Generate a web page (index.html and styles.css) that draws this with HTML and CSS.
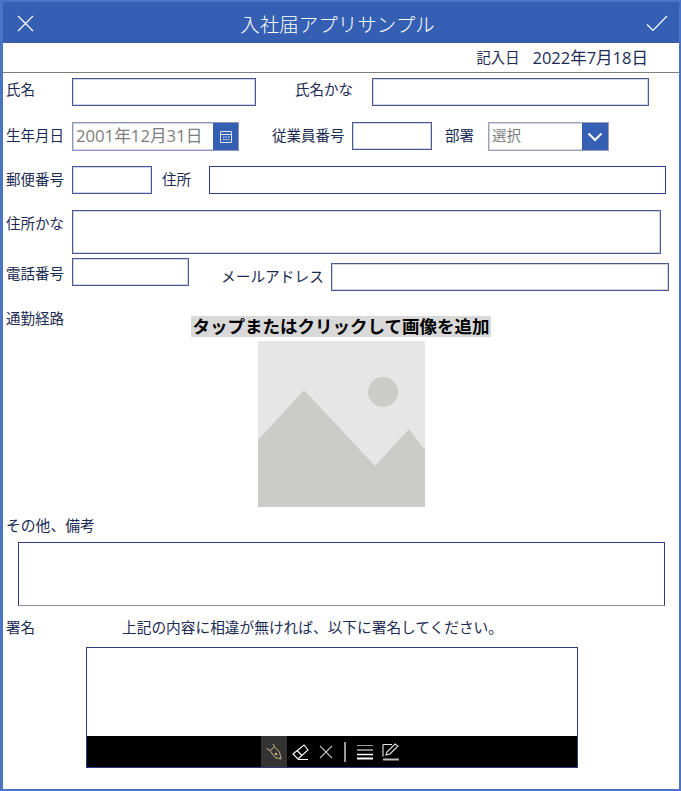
FILE: index.html
```html
<!DOCTYPE html>
<html lang="ja">
<head>
<meta charset="utf-8">
<title>入社届アプリサンプル</title>
<link rel="stylesheet" href="styles.css">
</head>
<body>
<div class="app">
  <header class="topbar">
    <svg class="ico-close" width="17" height="17" viewBox="0 0 17 17"><path d="M1 1 16 16M16 1 1 16" fill="none" stroke="#fff" stroke-width="1.300"/></svg>
    <h1 class="title">入社届アプリサンプル</h1>
    <svg class="ico-check" width="22" height="17" viewBox="0 0 22 17"><path d="M1 9.500 7 15.500 21 1" fill="none" stroke="#fff" stroke-width="1.200"/></svg>
  </header>
  <div class="datebar"><span class="datebar-label">記入日</span><span class="datebar-value">2022年7月18日</span></div>

  <div class="row row-1">
    <label class="lb lb-name">氏名</label><div class="field f-name"></div>
    <label class="lb lb-kana">氏名かな</label><div class="field f-kana"></div>
  </div>
  <div class="row row-2">
    <label class="lb lb-birth">生年月日</label>
    <div class="field f-date"><span class="placeholder">2001年12月31日</span>
      <span class="cal-btn"><svg width="14" height="14" viewBox="0 0 14 14"><path d="M1.500 1.500h11v11h-11zM1.500 4.500h11" fill="none" stroke="#dfe6f5"/><path d="M4 7h1.500M6.500 7H8M9 7h1.500M4 9.500h1.500M6.500 9.500H8M9 9.500h1.500" stroke="#dfe6f5"/></svg></span>
    </div>
    <label class="lb lb-emp">従業員番号</label><div class="field f-emp"></div>
    <label class="lb lb-dept">部署</label>
    <div class="field f-select"><span class="placeholder ph-small">選択</span>
      <span class="sel-btn"><svg width="16" height="10" viewBox="0 0 16 10"><path d="M1.500 1.500 8 8l6.500-6.500" fill="none" stroke="#fff" stroke-width="2"/></svg></span>
    </div>
  </div>
  <div class="row row-3">
    <label class="lb lb-zip">郵便番号</label><div class="field f-zip"></div>
    <label class="lb lb-addr">住所</label><div class="field f-addr"></div>
  </div>
  <div class="row row-4">
    <label class="lb lb-addrk">住所かな</label><div class="field f-addrk"></div>
  </div>
  <div class="row row-5">
    <label class="lb lb-tel">電話番号</label><div class="field f-tel"></div>
    <label class="lb lb-mail">メールアドレス</label><div class="field f-mail"></div>
  </div>
  <div class="row row-6">
    <label class="lb lb-route">通勤経路</label>
    <div class="picker">
      <span class="picker-text">タップまたはクリックして画像を追加</span>
      <svg class="picture" width="167" height="166" viewBox="0 0 167 166">
        <rect width="167" height="166" fill="#e6e6e6"/>
        <circle cx="125" cy="51" r="15" fill="#cbcbca"/>
        <path d="M0 99 46 49 117 125 151 88 167 109V166H0Z" fill="#cbcbca"/>
      </svg>
    </div>
  </div>
  <label class="lb lb-note">その他、備考</label>
  <div class="field f-note"></div>
  <div class="row row-sign">
    <label class="lb lb-sign">署名</label>
    <span class="sign-msg">上記の内容に相違が無ければ、以下に署名してください。</span>
  </div>
  <div class="field f-pad">
    <div class="pad-toolbar">
      <span class="tool tool-active"><svg width="24" height="24" viewBox="0 0 24 24"><path d="M4.500 8.500 8 10.500M11 4 12.500 7M8 10.500 12.500 7 17.500 12 19 19 13 17.500Z" fill="none" stroke="#c9b48a" stroke-width="1"/><circle cx="14" cy="14" r="1.300" fill="#c9b48a"/></svg></span>
      <span class="tool"><svg width="22" height="22" viewBox="0 0 22 22"><path d="M4 13 15 4 19 9 9 18ZM8 9.500l5 5M9 18.500H19" fill="none" stroke="#fff" stroke-width="1.100"/></svg></span>
      <span class="tool"><svg width="16" height="16" viewBox="0 0 16 16"><path d="M2 2 14 14M14 2 2 14" fill="none" stroke="#bdbdbd" stroke-width="1.100"/></svg></span>
      <span class="sep"></span>
      <span class="tool"><svg width="18" height="16" viewBox="0 0 18 16"><path d="M1 1.500h16" stroke="#999" stroke-width="1"/><path d="M1 6h16" stroke="#ddd" stroke-width="1.200"/><path d="M1 10.500h16" stroke="#fff" stroke-width="1.500"/><path d="M1 14.500h16" stroke="#fff" stroke-width="2"/></svg></span>
      <span class="tool"><svg width="20" height="20" viewBox="0 0 20 20"><path d="M2 2.500h9M2 2.500v12M5 13l1-3 8-8 3 2-8 8z" fill="none" stroke="#e6e6e6" stroke-width="1.100"/><path d="M2 17.500h16" stroke="#bbb" stroke-width="2"/></svg></span>
    </div>
  </div>
</div>
</body>
</html>
```
FILE: styles.css
```css
* { box-sizing: border-box; }
html, body { margin: 0; padding: 0; background: #fff; }
body { width: 681px; height: 791px; overflow: hidden; font-family: "Open Sans", "Noto Sans CJK JP", sans-serif; color: #1b2a52; }
.app { width: 681px; height: 791px; border: solid #4a74c6; border-width: 2px 2px 2px 3px; background: #fff; }

.topbar { height: 41px; background: #355fb2; display: flex; align-items: center; padding: 0 11px 0 14px; border-bottom: 1px solid #3d5a96; }
.title { flex: 1; margin: 0; padding: 6px 5px 0 0; text-align: center; color: #fff; font-size: 19.500px; font-weight: 300; line-height: 34px; }
.ico-close { margin-top: 2px; }
.ico-check { margin-top: 2px; }

.datebar { height: 30px; border-bottom: 1px solid #7f7f7f; display: flex; justify-content: flex-end; align-items: center; padding: 0 31px 2px 0; color: #1b2a52; }
.datebar-label { font-size: 14.300px; margin-right: 13px; }
.datebar-value { font-size: 16.500px; }

.row { display: flex; align-items: flex-start; }
.lb { display: block; font-size: 14.500px; line-height: 20px; white-space: nowrap; color: #1b2a52; }
.field { border: 1px solid #4b5890; background: #fff; flex: none; box-shadow: inset 0 0 0 1px rgba(120, 130, 175, .35); }

.row-1 { margin-top: 5px; }
.lb-name { margin: 2px 0 0 3px; width: 66px; }
.f-name { width: 184px; height: 28px; }
.lb-kana { margin: 2px 0 0 39px; width: 77px; }
.f-kana { width: 277px; height: 28px; }

.row-2 { margin-top: 16px; }
.lb-birth { margin: 4px 0 0 3px; width: 66px; }
.f-date { width: 167px; height: 29px; display: flex; align-items: center; border-color: #8e94bb; }
.placeholder { flex: 1; color: #7d7d7d; font-size: 16.700px; line-height: 23px; padding: 0 0 3px 3px; white-space: nowrap; }
.ph-small { font-size: 14.500px; }
.cal-btn { width: 25px; height: 27px; background: #355fb2; display: flex; align-items: center; justify-content: center; }
.lb-emp { margin: 4px 0 0 33px; width: 80px; }
.f-emp { width: 80px; height: 28px; }
.lb-dept { margin: 4px 0 0 13px; width: 43px; }
.f-select { width: 121px; height: 29px; display: flex; align-items: center; border-color: #9da1b8; }
.sel-btn { width: 26px; height: 27px; background: #355fb2; display: flex; align-items: center; justify-content: center; }

.row-3 { margin-top: 15px; }
.lb-zip { margin: 4px 0 0 3px; width: 66px; }
.f-zip { width: 80px; height: 28px; }
.lb-addr { margin: 4px 0 0 10px; width: 47px; }
.f-addr { width: 457px; height: 28px; box-shadow: none; border-color: #2f3d78; }

.row-4 { margin-top: 16px; }
.lb-addrk { margin: 4px 0 0 3px; width: 66px; }
.f-addrk { width: 589px; height: 44px; }

.row-5 { margin-top: 4px; }
.lb-tel { margin: 6px 0 0 3px; width: 66px; }
.f-tel { width: 117px; height: 28px; }
.lb-mail { margin: 8px 0 0 32px; width: 110px; font-size: 14.700px; }
.f-mail { width: 338px; height: 28px; margin-top: 5px; }

.row-6 { height: 220px; margin-top: -2px; }
.lb-route { margin: 20px 0 0 3px; width: 66px; }
.picker { width: 300px; margin: 27px 0 0 119px; display: flex; flex-direction: column; align-items: center; }
.picker-text { width: 300px; height: 21px; background: #d9d9d9; color: #000; font-family: "Noto Sans CJK JP", sans-serif; font-weight: 700; font-size: 17.500px; line-height: 19px; text-align: center; white-space: nowrap; }
.picture { display: block; margin-top: 4px; }

.lb-note { margin: 6px 0 0 3px; font-size: 14.800px; }
.f-note { width: 647px; height: 64px; margin: 7px 0 0 15px; box-shadow: none; border-color: #2f3d78; border-bottom-color: #8a8fb3; }

.row-sign { margin-top: 12px; }
.lb-sign { margin: 0 0 0 3px; width: 116px; }
.sign-msg { font-size: 14.700px; line-height: 20px; margin-top: -1px; color: #1b2a52; white-space: nowrap; }

.f-pad { width: 492px; height: 121px; margin: 9px 0 0 83px; display: flex; flex-direction: column; justify-content: flex-end; box-shadow: none; border-color: #2f3d78; }
.pad-toolbar { height: 31px; background: #000; display: flex; align-items: center; padding-left: 174px; }
.tool { width: 26px; height: 30px; display: flex; align-items: center; justify-content: center; flex: none; }
.tool-active { background: #333; height: 31px; }
.sep { width: 2px; height: 20px; background: #999; margin: 0 6px 0 5px; flex: none; }
```
